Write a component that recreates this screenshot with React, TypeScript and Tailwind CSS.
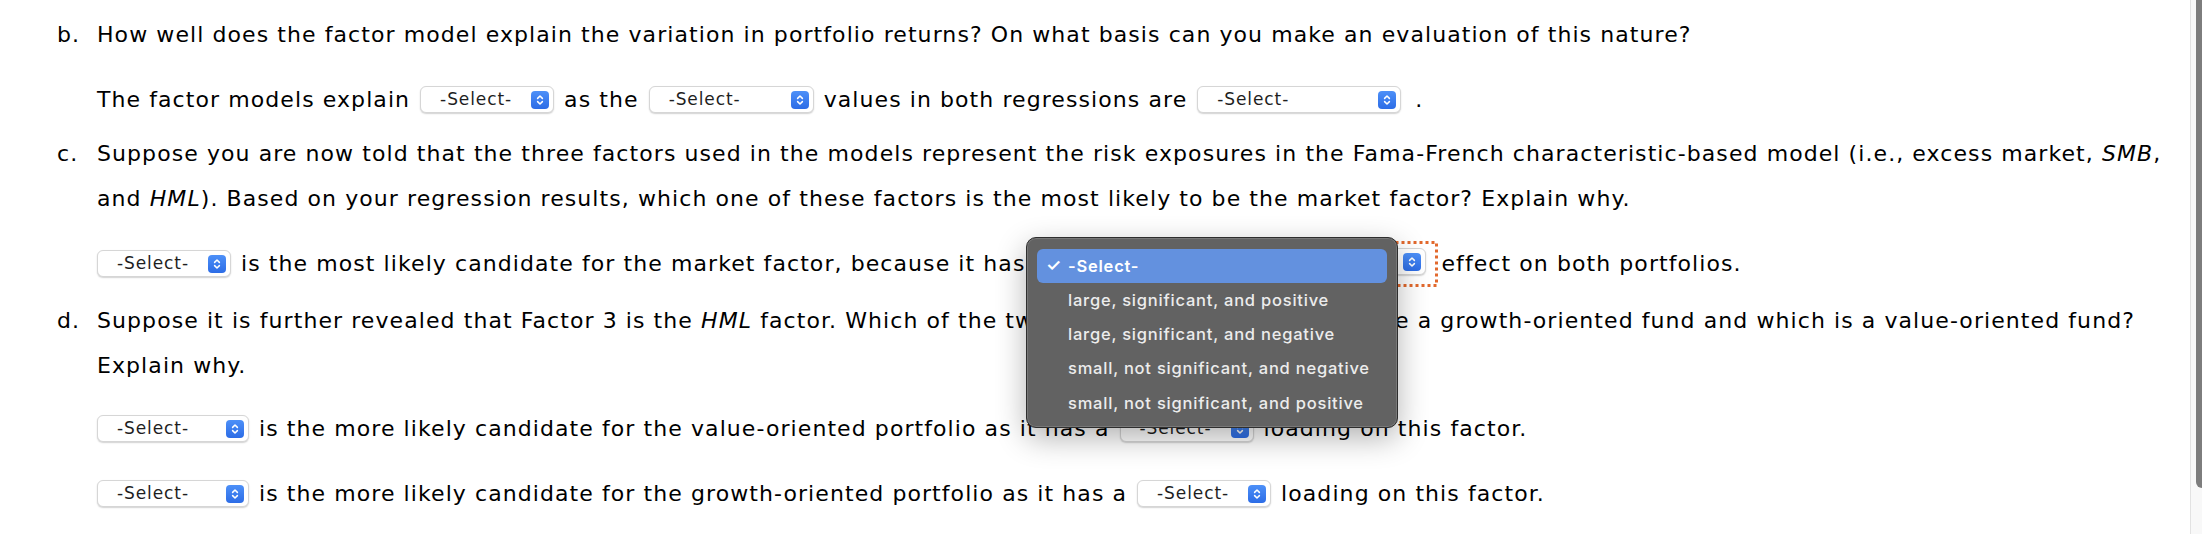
import React from "react";

const Stepper = () => (
    <svg width="18" height="18" viewBox="0 0 18 18" className="shrink-0">
        <defs>
            <linearGradient id="stepperBlue" x1="0" y1="0" x2="0" y2="1">
                <stop offset="0" stopColor="#4d90f8" />
                <stop offset="1" stopColor="#2c6ce6" />
            </linearGradient>
        </defs>
        <rect x="0" y="0" width="18" height="18" rx="4" fill="url(#stepperBlue)" />
        <path d="M6.6 7.4 L9 5 L11.4 7.4" stroke="white" strokeWidth="1.5" fill="none" strokeLinecap="round" strokeLinejoin="round" />
        <path d="M6.6 10.6 L9 13 L11.4 10.6" stroke="white" strokeWidth="1.5" fill="none" strokeLinecap="round" strokeLinejoin="round" />
    </svg>
);

// native-looking macOS popup button
const Select = ({ className }: { className: string }) => (
    <span
        className={`inline-flex shrink-0 items-center justify-between h-[27px] pl-[19px] pr-[4px] rounded-[6px] bg-white border border-[#d6d6d6] shadow-[0_1px_1.5px_rgba(0,0,0,0.18)] text-[17px] tracking-[0.9px] text-[#1e1e1e] ${className}`}
    >
        <span className="leading-none">-Select-</span>
        <Stepper />
    </span>
);

const Question = ({ label, children }: { label: string; children: React.ReactNode }) => (
    <div className="flex">
        <div className="w-[40px] shrink-0 leading-[45px]">{label}</div>
        <div className="flex-1">{children}</div>
    </div>
);

const Row = ({ children, className = "" }: { children: React.ReactNode; className?: string }) => (
    <div className={`flex items-center h-[45px] gap-[10px] whitespace-nowrap ${className}`}>{children}</div>
);

const menuItems = [
    "large, significant, and positive",
    "large, significant, and negative",
    "small, not significant, and negative",
    "small, not significant, and positive",
];

export default function App() {
    return (
        <div className="flex w-[2202px] h-[534px] overflow-hidden bg-white">
            <div className="relative flex-1 pt-[12px] pl-[57px] font-['DejaVu_Sans',sans-serif] text-[22px] tracking-[1.08px] text-black">
                {/* b */}
                <Question label="b.">
                    <p className="leading-[45px] whitespace-nowrap">
                        How well does the factor model explain the variation in portfolio returns? On what basis can you make an evaluation of this nature?
                    </p>
                    <Row className="mt-[20px]">
                        <span>The factor models explain</span>
                        <Select className="w-[134px]" />
                        <span>as the</span>
                        <Select className="w-[165px]" />
                        <span>values in both regressions are</span>
                        <Select className="w-[204px]" />
                        <span className="ml-[4px]">.</span>
                    </Row>
                </Question>

                {/* c */}
                <div className="mt-[9px]">
                    <Question label="c.">
                        <p className="leading-[45px] whitespace-nowrap">
                            Suppose you are now told that the three factors used in the models represent the risk exposures in the Fama-French characteristic-based model (i.e., excess market, <i>SMB</i>,
                            <br />
                            and <i>HML</i>). Based on your regression results, which one of these factors is the most likely to be the market factor? Explain why.
                        </p>
                        <Row className="mt-[20px]">
                            <Select className="w-[134px]" />
                            <span>is the most likely candidate for the market factor, because it has</span>
                            {/* focused select with dotted focus ring */}
                            <span className="relative -mx-[7px] flex items-center w-[410px] h-[46px] pl-[8px] pt-[2px] pb-[6px]">
                                <svg className="absolute left-0 top-0" width="410" height="46">
                                    <rect x="1.5" y="1.5" width="407" height="43" fill="none" stroke="#e2692d" strokeWidth="3" strokeDasharray="3 3" />
                                </svg>
                                <Select className="w-[390px]" />
                            </span>
                            <span>effect on both portfolios.</span>
                        </Row>
                    </Question>
                </div>

                {/* d */}
                <div className="mt-[12px]">
                    <Question label="d.">
                        <p className="leading-[45px] whitespace-nowrap">
                            Suppose it is further revealed that Factor 3 is the <i>HML</i> factor. Which of the two portfolios is more likely to be a growth-oriented fund and which is a value-oriented fund?
                            <br />
                            Explain why.
                        </p>
                        <Row className="mt-[18px]">
                            <Select className="w-[152px]" />
                            <span>is the more likely candidate for the value-oriented portfolio as it has a</span>
                            <Select className="w-[134px]" />
                            <span>loading on this factor.</span>
                        </Row>
                        <Row className="mt-[20px]">
                            <Select className="w-[152px]" />
                            <span>is the more likely candidate for the growth-oriented portfolio as it has a</span>
                            <Select className="w-[134px]" />
                            <span>loading on this factor.</span>
                        </Row>
                    </Question>
                </div>

                {/* open popup menu */}
                <div className="absolute left-[1026px] top-[237px] z-10 w-[372px] h-[191px] pt-[11px] px-[10px] rounded-[10px] bg-[#626262] border border-[#2e2e2e] shadow-[inset_0_0_0_1px_rgba(255,255,255,0.14),0_10px_30px_rgba(0,0,0,0.3)] font-['Inter',sans-serif] text-[16.5px] tracking-[0.78px]">
                    <div className="flex items-center h-[34px] rounded-[6px] bg-[#6391df] text-white font-semibold">
                        <span className="w-[31px] pl-[9px] text-[17px]">✓</span>
                        <span>-Select-</span>
                    </div>
                    {menuItems.map((item) => (
                        <div key={item} className="flex items-center h-[34.3px] pl-[31px] text-[#ececec] font-medium">
                            {item}
                        </div>
                    ))}
                </div>
            </div>

            {/* scrollbar */}
            <div className="w-[12px] shrink-0 border-l border-[#e2e2e2] bg-[#f8f8f8] pl-[5px]">
                <div className="w-[7px] h-[488px] rounded-bl-[6px] bg-[#7d7d7d]" />
            </div>
        </div>
    );
}
